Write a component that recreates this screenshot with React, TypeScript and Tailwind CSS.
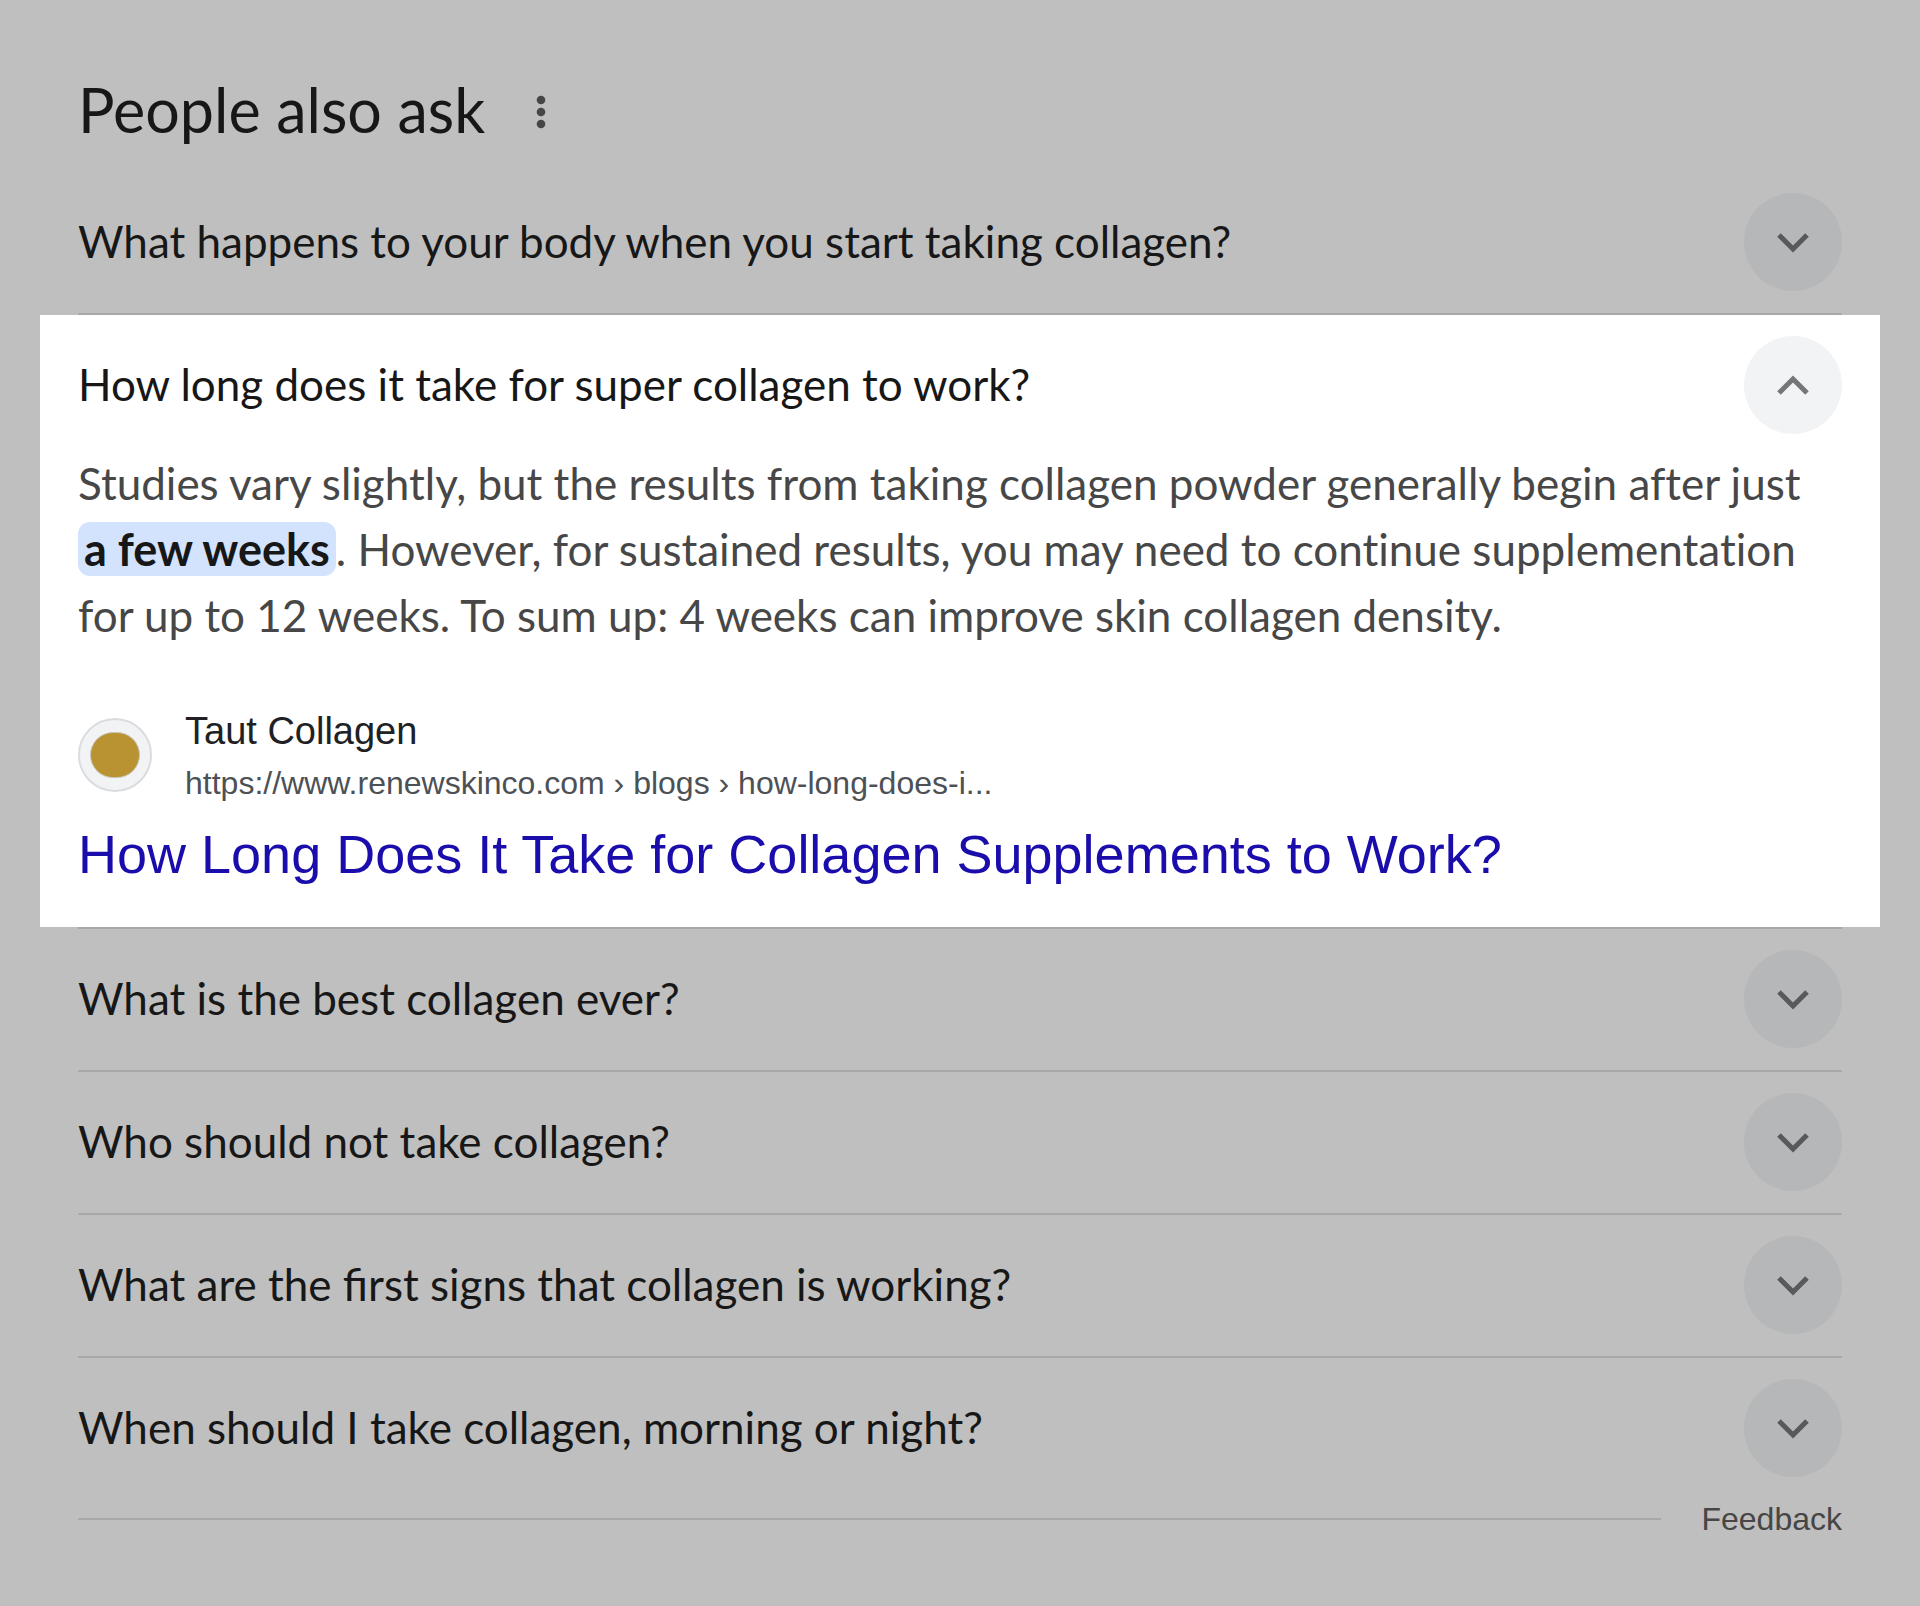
import { useState } from "react";

type Item = { id: string; question: string };

const before: Item[] = [
  { id: "body", question: "What happens to your body when you start taking collagen?" },
];

const after: Item[] = [
  { id: "best", question: "What is the best collagen ever?" },
  { id: "avoid", question: "Who should not take collagen?" },
  { id: "signs", question: "What are the first signs that collagen is working?" },
  { id: "timing", question: "When should I take collagen, morning or night?" },
];

function Chevron({ up = false }: { up?: boolean }) {
  return (
    <svg viewBox="0 0 34 34" className="size-[34px]" fill="none" stroke="currentColor" strokeWidth="5" aria-hidden="true">
      <path d={up ? "M3 25 17 11l14 14" : "M3 10l14 14L31 10"} />
    </svg>
  );
}

function Question({ item, last }: { item: Item; last?: boolean }) {
  const [active, setActive] = useState(false);
  return (
    <li className={last ? "mx-[38px]" : "mx-[38px] border-b-2 border-[#a7a8aa]"}>
      <button
        type="button"
        aria-expanded={active}
        onClick={() => setActive(!active)}
        className="flex w-full items-center justify-between gap-8 pt-[21px] pb-[22px] text-left text-[44px] leading-[56px] text-[#171717]"
      >
        <span className="pb-[2px]">{item.question}</span>
        <span className="flex size-[98px] shrink-0 items-center justify-center rounded-full bg-[#b6b7b8] text-[#58595a]">
          <Chevron up={active} />
        </span>
      </button>
    </li>
  );
}

function Answer() {
  return (
    <li className="bg-white px-[38px] pb-[38px]">
      <button
        type="button"
        aria-expanded="true"
        className="flex w-full items-center justify-between gap-8 pt-[21px] text-left text-[44px] leading-[56px] text-[#171717]"
      >
        <span className="pb-[2px]">How long does it take for super collagen to work?</span>
        <span className="flex size-[98px] shrink-0 items-center justify-center rounded-full bg-[#f2f3f5] text-[#757677]">
          <Chevron up />
        </span>
      </button>
      <p className="mt-4 text-[44px] leading-[66px] text-[#474747] [font-variant-ligatures:none]">
        Studies vary slightly, but the results from taking collagen powder generally begin after just{" "}
        <mark className="inline-block rounded-xl bg-[#d3e3fd] px-[6px] text-[45px] leading-[54px] font-bold whitespace-nowrap text-[#171717]">
          a few weeks
        </mark>
        . However, for sustained results, you may need to continue supplementation for up to 12 weeks. To sum up: 4
        weeks can improve skin collagen density.
      </p>
      <a href="#article" className="mt-[53px] block font-['Liberation_Sans',sans-serif]">
        <span className="flex items-center gap-[33px]">
          <span className="flex size-[74px] shrink-0 items-center justify-center rounded-full border-2 border-[#dadce0] bg-[#f2f3f5]">
            <span className="h-[46px] w-[50px] rounded-full border border-[#c9c4b8] bg-[#b99232]" />
          </span>
          <span className="flex flex-col pt-1">
            <span className="text-[38px] leading-[52px] text-[#202124]">Taut Collagen</span>
            <span className="text-[32px] leading-[52px] text-[#4d5156]">
              https://www.renewskinco.com › blogs › how-long-does-i...
            </span>
          </span>
        </span>
        <h3 className="mt-[10px] text-[54px] leading-[70px] text-[#1a0dab]">
          How Long Does It Take for Collagen Supplements to Work?
        </h3>
      </a>
    </li>
  );
}

export default function App() {
  return (
    <main className="min-h-screen bg-[#bfbfbf] px-10 pt-[72px] pb-[60px] font-[Lato,sans-serif]">
      <header className="flex items-center gap-[51px] px-[38px]">
        <h2 className="pb-1 text-[61px] leading-[76px] text-[#171717]">People also ask</h2>
        <button type="button" aria-label="About this result" className="text-[#464646]">
          <svg viewBox="0 0 10 34" className="h-[34px] w-[10px]" fill="currentColor" aria-hidden="true">
            <circle cx="5" cy="5" r="4.3" />
            <circle cx="5" cy="17" r="4.3" />
            <circle cx="5" cy="29" r="4.3" />
          </svg>
        </button>
      </header>
      <ul className="mt-5">
        {before.map((item) => (
          <Question key={item.id} item={item} />
        ))}
        <Answer />
        <li aria-hidden="true" className="mx-[38px] h-[2px] bg-[#a7a8aa]" />
        {after.map((item, i) => (
          <Question key={item.id} item={item} last={i === after.length - 1} />
        ))}
      </ul>
      <footer className="flex items-center gap-10 px-[38px] font-['Liberation_Sans',sans-serif]">
        <span className="h-[2px] flex-1 bg-[#a7a8aa]" />
        <a href="#feedback" className="text-[32px] leading-[40px] text-[#464646]">
          Feedback
        </a>
      </footer>
    </main>
  );
}
